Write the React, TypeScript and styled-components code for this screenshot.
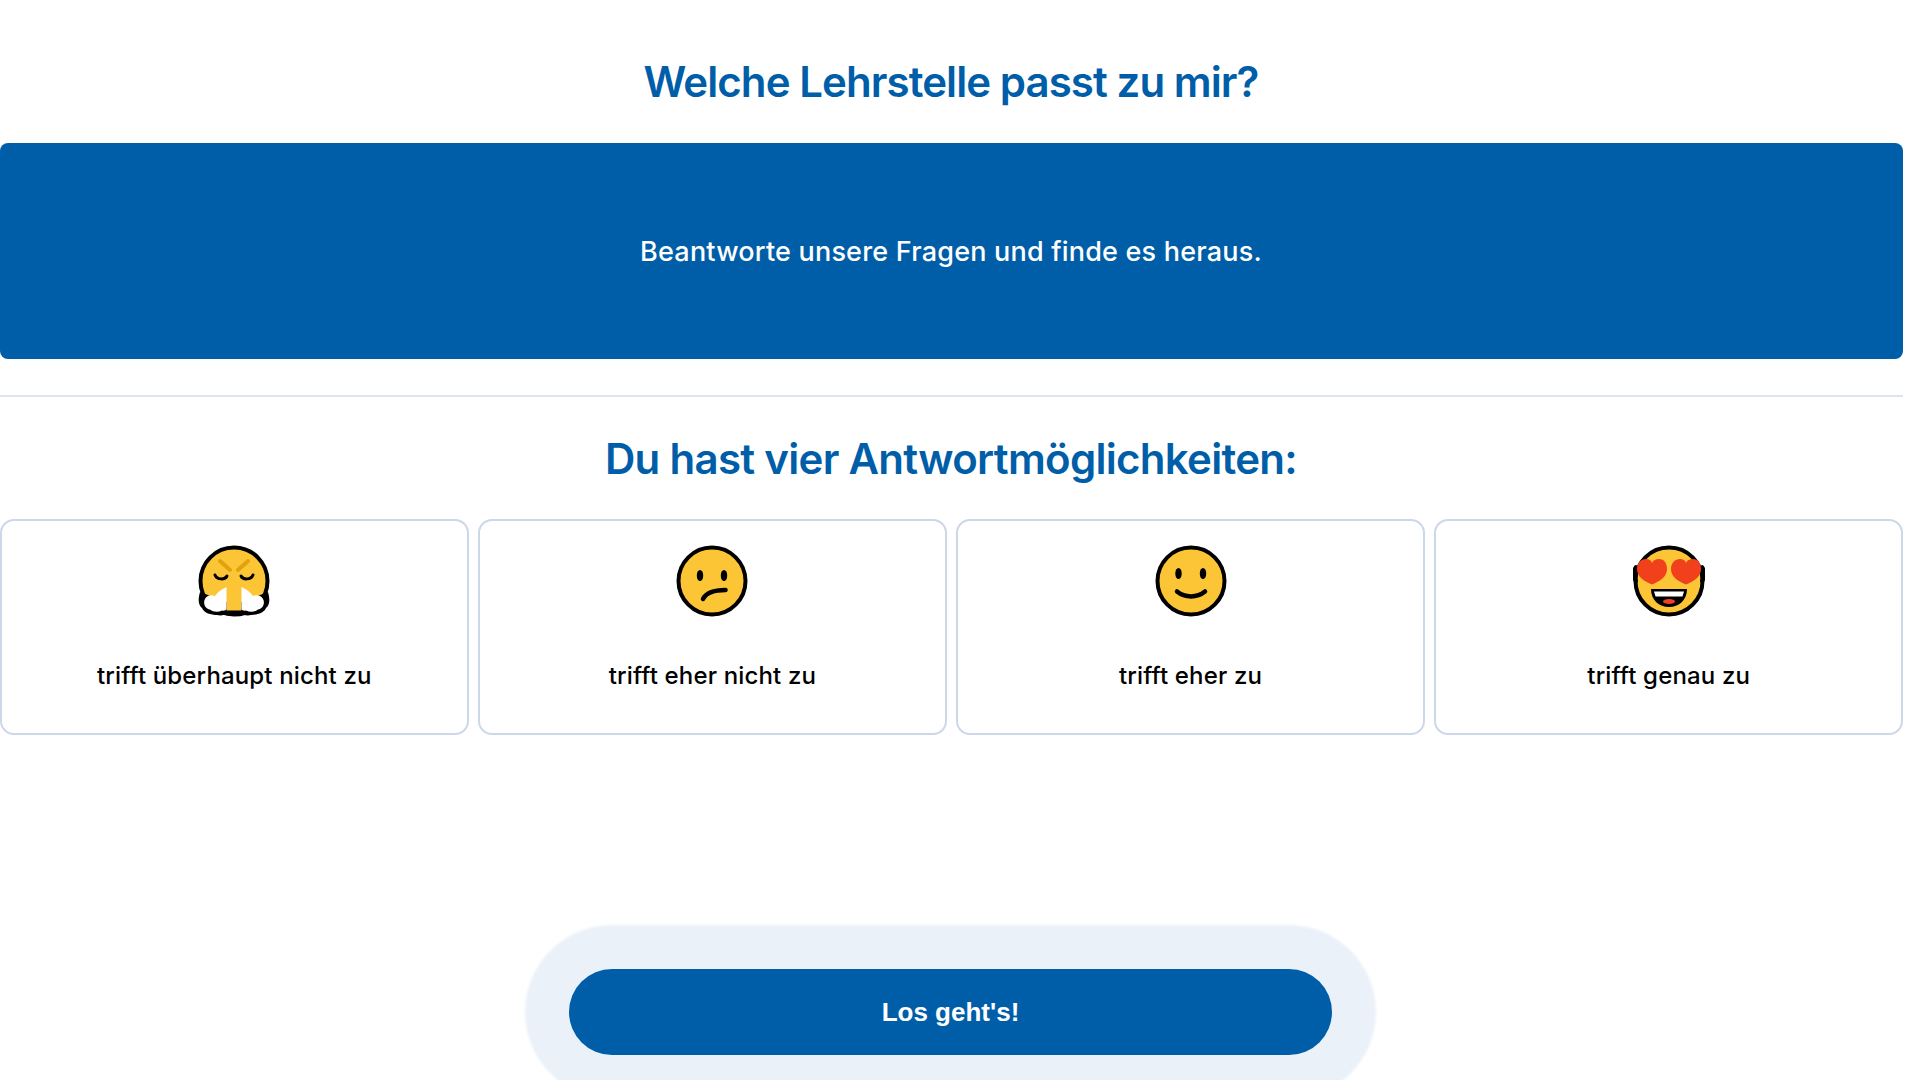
import styled, { createGlobalStyle } from "styled-components";

const blue = "#005ea8";

const GlobalStyle = createGlobalStyle`
    html, body {
        margin: 0;
        padding: 0;
        height: 1080px;
        overflow: hidden;
        background: #fff;
        font-family: Inter, "Open Sans", sans-serif;
    }
`
const Page = styled.div`
    width: 1903px;
    height: 1080px;
    overflow: hidden;
    display: flex;
    flex-direction: column;
`
const Title = styled.h1`
    margin: 0;
    height: 143px;
    display: flex;
    align-items: center;
    justify-content: center;
    padding: 20px 1px 0 0;
    box-sizing: border-box;
    color: ${blue};
    font-size: 42px;
    font-weight: 600;
    letter-spacing: -0.92px;
`
const Banner = styled.div`
    height: 216px;
    padding-right: 1px;
    background: ${blue};
    border-radius: 8px;
    display: flex;
    align-items: center;
    justify-content: center;
    color: #fff;
    font-size: 27px;
    font-weight: 500;
    letter-spacing: 0.2px;
`
const Divider = styled.hr`
    margin: 36px 0 0;
    border: 0;
    border-top: 2px solid #dde4ec;
`
const SubTitle = styled.h2`
    margin: 0;
    height: 122px;
    padding-right: 1px;
    display: flex;
    align-items: center;
    justify-content: center;
    color: ${blue};
    font-size: 42px;
    font-weight: 600;
    letter-spacing: -0.7px;
`
const Options = styled.div`
    display: grid;
    grid-template-columns: repeat(4, 1fr);
    gap: 9.5px;
`
const Option = styled.div`
    height: 216px;
    box-sizing: border-box;
    border: 2px solid #ccd7e8;
    border-radius: 14px;
    display: flex;
    flex-direction: column;
    align-items: center;
    padding-top: 24px;
`
const Label = styled.div`
    margin-top: 44px;
    color: #000;
    font-size: 24px;
    font-weight: 500;
    letter-spacing: 0.15px;
`
const Footer = styled.div`
    display: flex;
    justify-content: center;
    padding: 234px 2px 0 0;
`
const StartButton = styled.button`
    width: 763px;
    height: 86px;
    border: 0;
    border-radius: 43px;
    background: ${blue};
    color: #fff;
    font-family: "Liberation Sans", Arial, sans-serif;
    font-size: 26px;
    font-weight: 700;
    box-shadow: 0 0 3px 44px #ebf1f9;
`

const Face = ({ children }: { children: React.ReactNode }) => (
    <svg width="72" height="72" viewBox="0 0 72 72">
        <circle cx="36" cy="36" r="33.5" fill="#fcc536" stroke="#000" strokeWidth="4" />
        {children}
    </svg>
)

const Fuming = () => (
    <Face>
        <g fill="none" strokeLinecap="round">
            <path d="M22 16l10 9M50 16l-10 9" stroke="#e0a30b" strokeWidth="4" />
            <path d="M17 30c2 5 10 5 12 1M43 31c2 4 10 4 12-1" stroke="#000" strokeWidth="3" />
            <path d="M31 50c3-2 7-2 10 0" stroke="#000" strokeWidth="3.5" strokeLinecap="butt" />
        </g>
        <path
            d="M2 47L10 50 36 60 62 50 70 47C72 54 72 60 68 63 66 68 59 70 53 70 49 71 45 70 43 68 41 69 38 70 36 70 34 70 31 69 29 68 27 70 23 71 19 70 13 70 6 68 4 63 0 60 0 54 2 47z"
            fill="#000"
        />
        <path d="M28.5 44H43.500V65.500H28.500z" fill="#fcc536" />
        <path d="M28.500 42C22 45 19 48 17 51 12 49 8 51 6.500 55 5 60 8 64 12 64.500 15 67 20 67.500 24 65.500 26 66 28 65.500 28.500 64z" fill="#fff" />
        <path d="M43.500 42C50 45 53 48 55 51 60 49 64 51 65.500 55 67 60 64 64 60 64.500 57 67 52 67.500 48 65.500 46 66 44 65.500 43.500 64z" fill="#fff" />
    </Face>
)

const Unsure = () => (
    <Face>
        <ellipse cx="24" cy="30.5" rx="3.2" ry="5.5" fill="#000" />
        <ellipse cx="48" cy="30.5" rx="3.2" ry="5.5" fill="#000" />
        <path d="M27 54c3-6 11-9 22.500-9" fill="none" stroke="#000" strokeWidth="4.5" strokeLinecap="round" />
    </Face>
)

const Smile = () => (
    <Face>
        <ellipse cx="23.5" cy="28.5" rx="3.2" ry="5.5" fill="#000" />
        <ellipse cx="48" cy="28.5" rx="3.2" ry="5.5" fill="#000" />
        <path d="M22 46.5c8 6.500 20 6.500 28 0" fill="none" stroke="#000" strokeWidth="4.5" strokeLinecap="round" />
    </Face>
)

const Heart = ({ x }: { x: number }) => (
    <path
        d={`M${x} 39.500c-8-3-15-8-15-15.500 0-6 4-10 9-10 3 0 5 1 6 4 1-3 4-4 7-4 5 0 8 4 8 10 0 7.500-7 12.500-15 15.500z`}
        fill="#f1401c"
    />
)

const HeartEyes = () => (
    <Face>
        <path d="M3 22c-3 4-3 10 0 14M69 22c3 4 3 10 0 14" fill="none" stroke="#000" strokeWidth="4" strokeLinecap="round" />
        <Heart x={19} />
        <Heart x={53} />
        <path d="M18 44h36c0 11-8 18-18 18s-18-7-18-18z" fill="#000" />
        <path d="M21 46.500h30l-1.500 5h-27z" fill="#fff" />
        <ellipse cx="36" cy="56.500" rx="6" ry="2.600" fill="#f1401c" />
    </Face>
)

const options = [
    { icon: <Fuming />, label: "trifft überhaupt nicht zu" },
    { icon: <Unsure />, label: "trifft eher nicht zu" },
    { icon: <Smile />, label: "trifft eher zu" },
    { icon: <HeartEyes />, label: "trifft genau zu" },
]

const App = () => {
    return (
        <Page>
            <GlobalStyle />
            <Title>Welche Lehrstelle passt zu mir?</Title>
            <Banner>Beantworte unsere Fragen und finde es heraus.</Banner>
            <Divider />
            <SubTitle>Du hast vier Antwortmöglichkeiten:</SubTitle>
            <Options>
                {options.map((o) => (
                    <Option key={o.label}>
                        {o.icon}
                        <Label>{o.label}</Label>
                    </Option>
                ))}
            </Options>
            <Footer>
                <StartButton>Los geht's!</StartButton>
            </Footer>
        </Page>
    )
}
export default App;
